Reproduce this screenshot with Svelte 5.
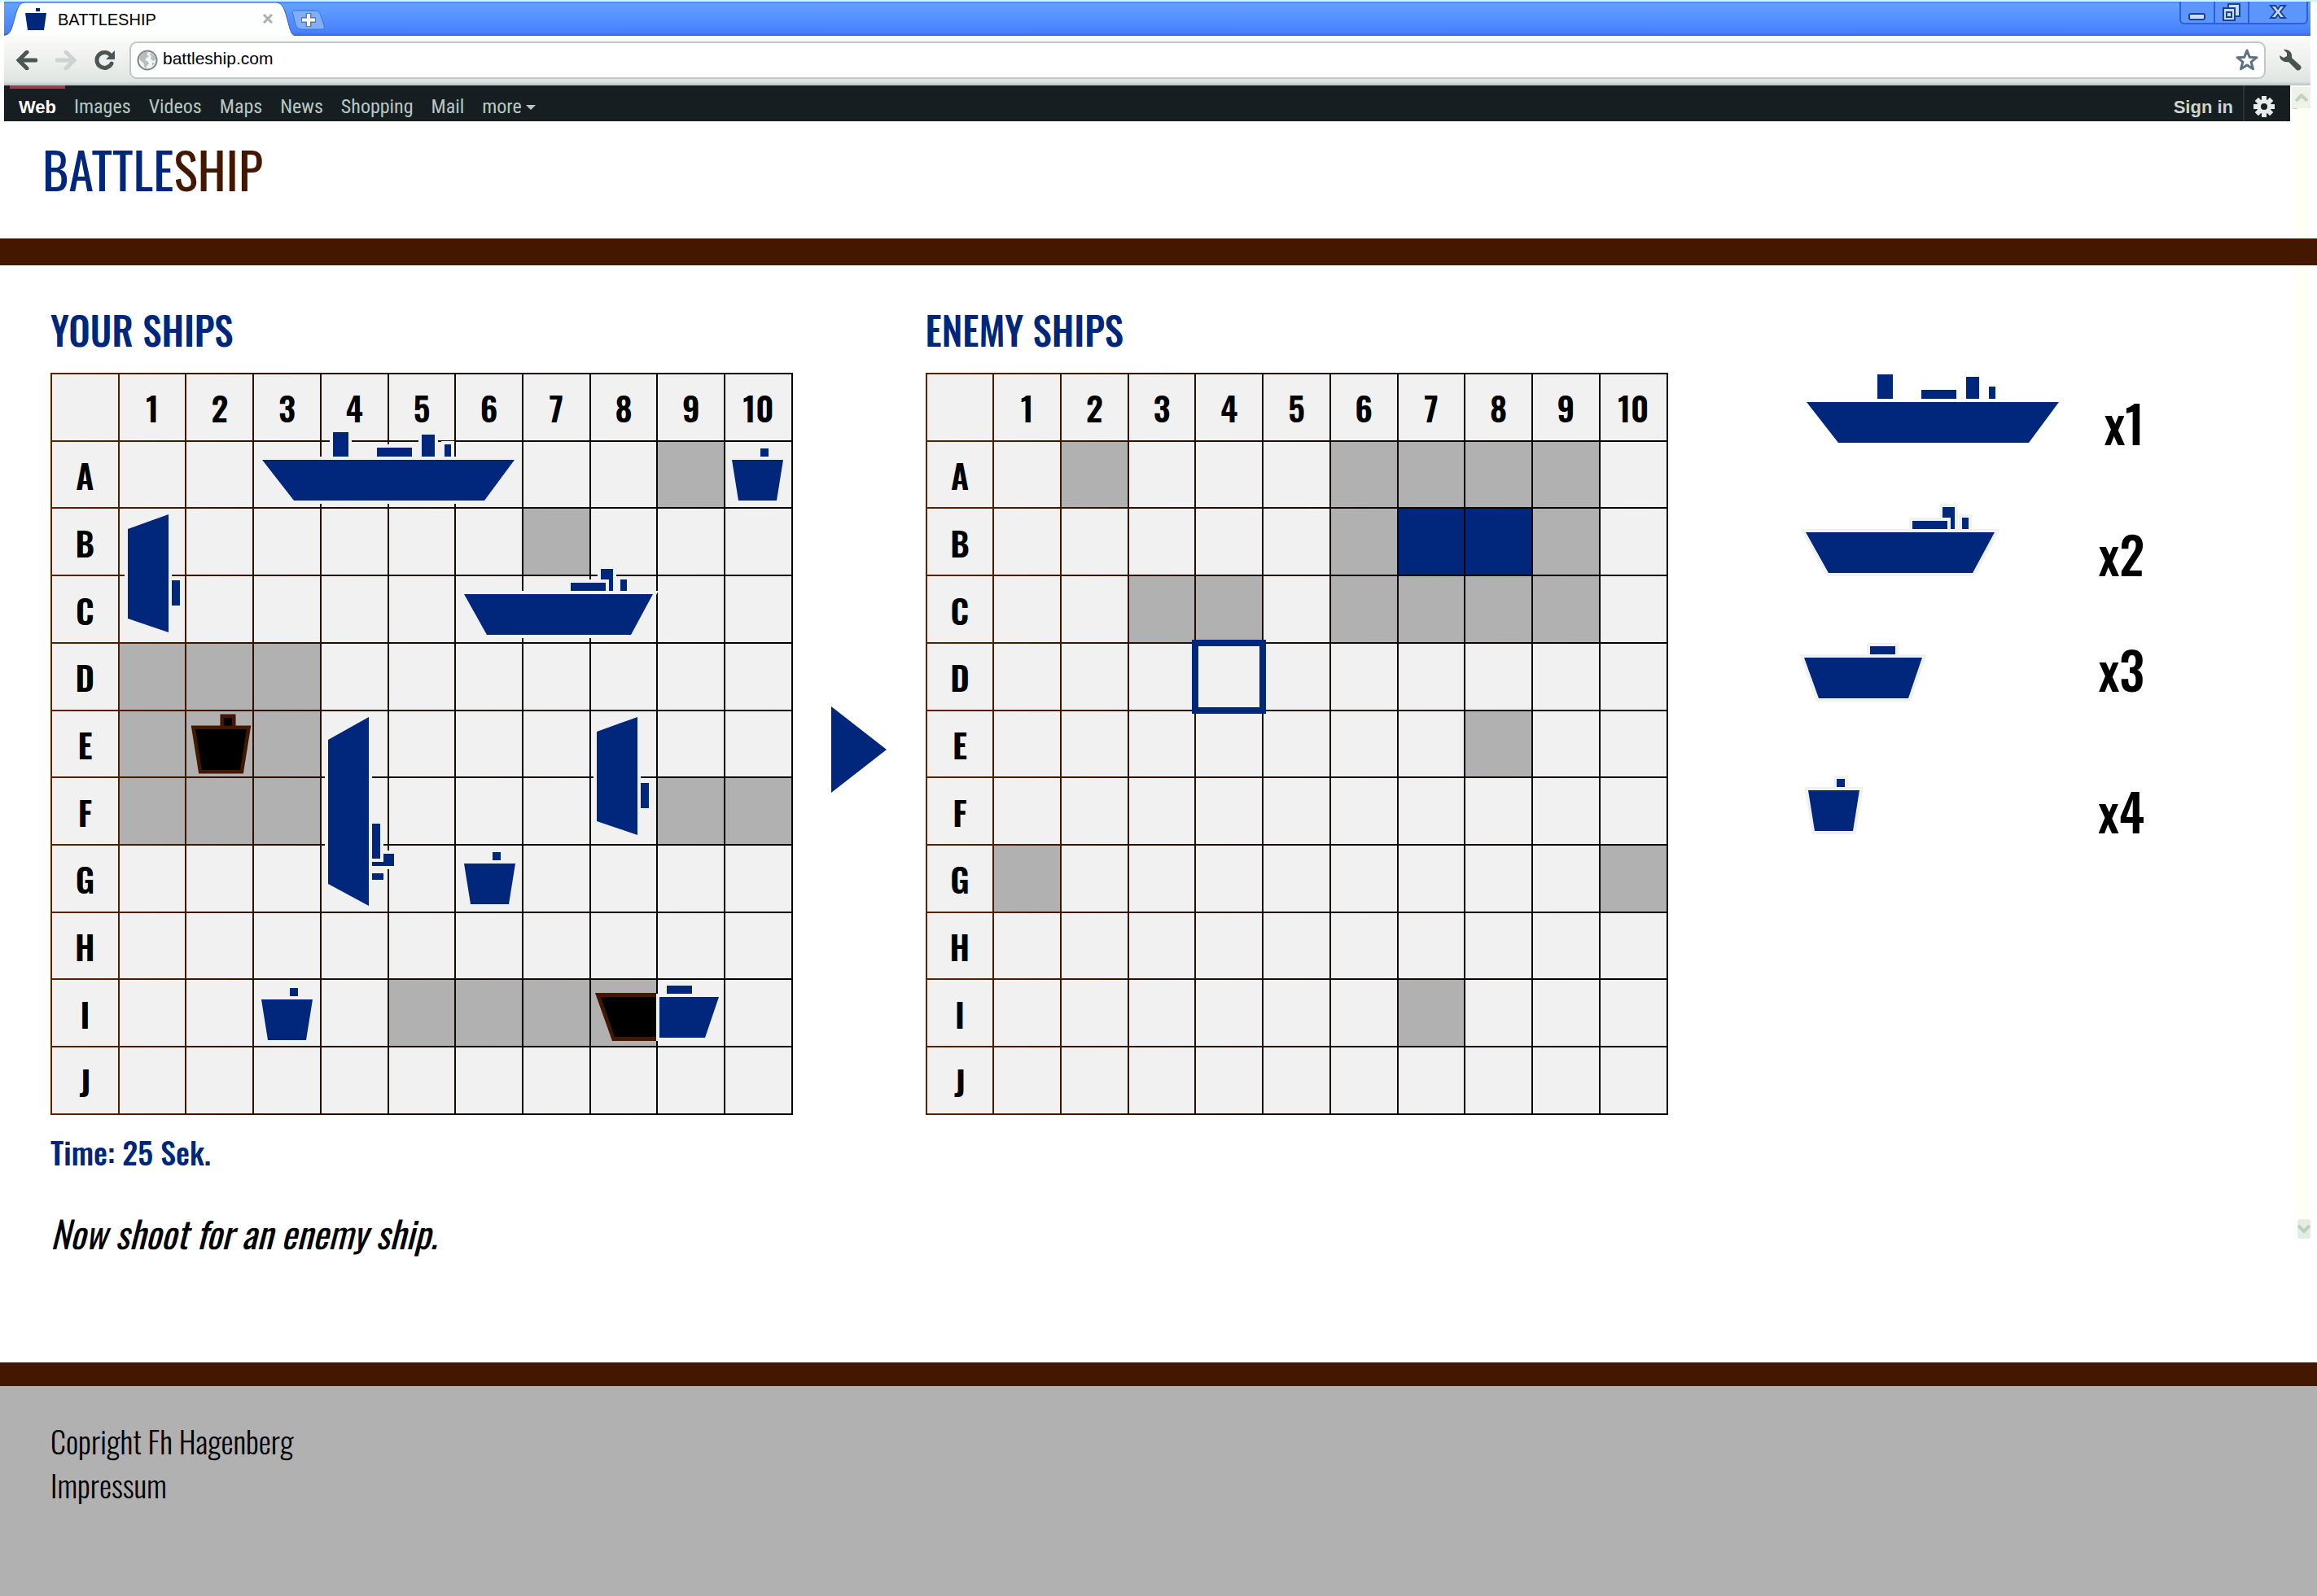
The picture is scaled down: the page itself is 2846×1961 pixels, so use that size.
<script>
  const columns = [1, 2, 3, 4, 5, 6, 7, 8, 9, 10];
  const rows = ['A', 'B', 'C', 'D', 'E', 'F', 'G', 'H', 'I', 'J'];
  const links = ['Images', 'Videos', 'Maps', 'News', 'Shopping', 'Mail'];

  const ownMisses = new Set([
    'A9', 'B7', 'D1', 'D2', 'D3', 'E1', 'E2', 'E3', 'F1', 'F2', 'F3',
    'F9', 'F10', 'I5', 'I6', 'I7', 'I8'
  ]);
  const enemyMisses = new Set([
    'A2', 'A6', 'A7', 'A8', 'A9', 'B6', 'B9', 'C3', 'C4', 'C6', 'C7',
    'C8', 'C9', 'E8', 'G1', 'G10', 'I7'
  ]);
  const enemyHits = new Set(['B7', 'B8']);
  let selected = $state('D4');

  // Every shape has its origin at the left end of the deck line.
  const shapes = {
    4: { hull: '0,0 310,0 273,50 39,50', towers: [[87, -34, 19, 30], [141, -15, 43, 11], [196, -31, 16, 27], [224, -19, 8, 15]] },
    3: { hull: '0,0 232,0 205,50 28,50', towers: [[168, -31, 15, 27], [131, -14, 43, 10], [192, -18, 8, 14]] },
    2: { hull: '0,0 145,0 128,50 18,50', towers: [[81, -14, 31, 10]] },
    1: { hull: '0,0 63,0 55,50 8,50', towers: [[35, -14, 10, 10]] }
  };

  const fleet = [
    { size: 4, x: 260, y: 107, turn: 0 },
    { size: 1, x: 837, y: 107, turn: 0 },
    { size: 2, x: 145, y: 174, turn: 90 },
    { size: 3, x: 508, y: 272, turn: 0 },
    { size: 3, x: 391, y: 423, turn: 90 },
    { size: 2, x: 721, y: 423, turn: 90 },
    { size: 1, x: 508, y: 603, turn: 0 },
    { size: 1, x: 259, y: 770, turn: 0 },
    { size: 1, x: 178, y: 438, turn: 0, sunk: true }
  ];

  const legend = [
    { size: 4, box: '-11 -36 326 90', width: 326, height: 90 },
    { size: 3, box: '-10 -36 250 90', width: 250, height: 90 },
    { size: 2, box: '-8 -20 162 74', width: 162, height: 74 },
    { size: 1, box: '-13 -20 82 74', width: 82, height: 74 }
  ];
</script>

{#snippet ship(size)}
  {#each shapes[size].towers as [x, y, width, height]}
    <rect {x} {y} {width} {height} />
  {/each}
  <polygon points={shapes[size].hull} />
{/snippet}

<div class="page">
  <div class="browser">
    <div class="tabs">
      <div class="tab">
        <svg class="tab-shape" viewBox="0 0 358 42" aria-hidden="true">
          <path d="M0 42C8 41 9 34 12 24C15 14 17 1 25 1H334C343 1 345 12 348 22C351 33 352 41 358 42Z" />
          <path class="edge" d="M0 41C8 40 9 34 12 24C15 14 17 1 25 1H334C343 1 345 12 348 22C351 33 352 41 358 42" />
        </svg>
        <svg class="favicon" viewBox="0 0 26 27" aria-hidden="true">
          <path d="M13 0h5v4h-5zM0 6h26l-3 21H3z" />
        </svg>
        <span class="tab-title">BATTLESHIP</span>
        <button class="close" aria-label="Close tab">
          <svg viewBox="0 0 12 12"><path d="M1 1l10 10M11 1L1 11" /></svg>
        </button>
      </div>
      <button class="new-tab" aria-label="New tab">
        <svg viewBox="0 0 42 25">
          <path class="back" d="M4 1H29C33 1 35 4 36 7L40 19C41 22 40 24 37 24H13C8 24 6 21 5 18L2 6C1 3 1 1 4 1Z" />
          <path class="plus-edge" d="M21 4v17M12 12.500h18" />
          <path class="plus" d="M21 5v15M13 12.500h16" />
        </svg>
      </button>
      <div class="window-buttons">
        <button aria-label="Minimize">
          <svg viewBox="0 0 22 22"><rect x="1" y="13" width="19" height="7" rx="2" /></svg>
        </button>
        <button aria-label="Restore">
          <svg viewBox="0 0 22 22">
            <rect x="7" y="1" width="14" height="15" />
            <rect x="1" y="6" width="14" height="15" />
            <rect class="hole" x="5" y="11" width="6" height="6" />
          </svg>
        </button>
        <button class="wide" aria-label="Close window">
          <svg viewBox="0 0 22 22"><path d="M2 3h6l3 4 3-4h6l-6 7.500 6 7.500h-6l-3-4-3 4H2l6-7.500z" /></svg>
        </button>
      </div>
    </div>

    <div class="toolbar">
      <button class="tool" aria-label="Back">
        <svg viewBox="0 0 26 24"><path d="M24 12H4M13 2L3 12l10 10" /></svg>
      </button>
      <button class="tool faded" aria-label="Forward">
        <svg viewBox="0 0 26 24"><path d="M2 12h20M13 2l10 10-10 10" /></svg>
      </button>
      <button class="tool" aria-label="Reload">
        <svg viewBox="0 0 26 24">
          <path d="M21 16A9.500 9.500 0 1 1 19 5" />
          <path class="solid" d="M25 0v11H14z" />
        </svg>
      </button>
      <div class="address">
        <svg class="globe" viewBox="0 0 26 26" aria-hidden="true">
          <circle cx="13" cy="13" r="11.500" />
          <path d="M4 7C7 3 11 2 14 3L12 6L15 8L12 10L10 13L13 14L15 17L12 20L11 23C9 22 9 18 8 16L5 14L3 11ZM17 4C21 6 23 9 23 12L20 14L17 11L18 8L16 6ZM19 16L22 16L19 20Z" />
        </svg>
        <input aria-label="Address" value="battleship.com" />
        <button class="star" aria-label="Bookmark this page">
          <svg viewBox="0 0 30 30"><path d="M15 3l3.200 8.300 8.800.4-6.900 5.500 2.400 8.600L15 21l-7.500 4.800 2.400-8.600L3 11.700l8.800-.4z" /></svg>
        </button>
      </div>
      <button class="wrench" aria-label="Settings">
        <svg viewBox="0 0 30 28">
          <path d="M7 1C11 0 17 3 17 8C17 10 17 11 18 12L28 21C30 24 26 28 23 26L13 16C8 17 2 14 2 8L7 11L11 9L11 5Z" />
        </svg>
      </button>
    </div>

    <nav class="services">
      <a class="current" href="#web">Web</a>
      {#each links as link}
        <a href="#{link.toLowerCase()}">{link}</a>
      {/each}
      <a href="#more">more <i class="caret"></i></a>
      <a class="sign-in" href="#signin">Sign in</a>
      <button class="gear" aria-label="Options">
        <svg viewBox="-14 -14 28 28">
          {#each [0, 45, 90, 135] as angle}
            <rect x="-3" y="-13" width="6" height="26" transform="rotate({angle})" />
          {/each}
          <circle r="9" />
          <circle class="hole" r="4" />
        </svg>
      </button>
    </nav>
  </div>

  <div class="scrollbar" aria-hidden="true">
    <span class="scroll-up"><svg viewBox="0 0 16 10"><path d="M1 9l7-7 7 7" /></svg></span>
    <span class="track"></span>
    <span class="scroll-down"><svg viewBox="0 0 16 10"><path d="M1 1l7 7 7-7" /></svg></span>
  </div>

  <header>
    <h1>BATTLE<span>SHIP</span></h1>
  </header>

  <main>
    <h2 class="own">YOUR SHIPS</h2>
    <h2 class="enemy">ENEMY SHIPS</h2>

    <div class="board own">
      <table aria-label="Your ships">
        <tbody>
          <tr><td></td>{#each columns as column}<th scope="col">{column}</th>{/each}</tr>
          {#each rows as row}
            <tr>
              <th scope="row">{row}</th>
              {#each columns as column}
                <td class:miss={ownMisses.has(row + column)}></td>
              {/each}
            </tr>
          {/each}
        </tbody>
      </table>
      <svg class="fleet" viewBox="0 0 912 912" aria-hidden="true">
        {#each fleet as item}
          <g class="ship outlined" class:sunk={item.sunk} transform="translate({item.x} {item.y}) rotate({item.turn})">
            {@render ship(item.size)}
          </g>
        {/each}
        <g transform="translate(676 767)">
          <polygon class="scorch" points="-7,-5 68,-5 68,54 14,54" />
          <polygon points="0,0 68,0 68,49 17,49" />
          <g class="ship outlined">
            <rect x="81" y="-14" width="31" height="10" />
            <polygon points="72,0 145,0 128,50 72,50" />
          </g>
        </g>
      </svg>
    </div>

    <svg class="turn" viewBox="0 0 68 106" role="img" aria-label="Your turn to shoot">
      <path d="M0 0L68 53L0 106Z" />
    </svg>

    <div class="board enemy">
      <table aria-label="Enemy ships">
        <tbody>
          <tr><td></td>{#each columns as column}<th scope="col">{column}</th>{/each}</tr>
          {#each rows as row}
            <tr>
              <th scope="row">{row}</th>
              {#each columns as column}
                <td
                  class:miss={enemyMisses.has(row + column)}
                  class:hit={enemyHits.has(row + column)}
                  class:selected={selected === row + column}
                >
                  <button aria-label="{row}{column}" onclick={() => (selected = row + column)}></button>
                </td>
              {/each}
            </tr>
          {/each}
        </tbody>
      </table>
    </div>

    <div class="legend">
      <div class="kinds">
        {#each legend as item}
          <svg class="ship" class:outlined={item.size < 4} viewBox={item.box} width={item.width} height={item.height} role="img" aria-label="Ship of length {item.size}">
            {@render ship(item.size)}
          </svg>
        {/each}
      </div>
      <div class="counts">
        {#each legend as item, index}
          <span>x{index + 1}</span>
        {/each}
      </div>
    </div>

    <div class="notes">
      <p class="time">Time: 25 Sek.</p>
      <p class="hint">Now shoot for an enemy ship.</p>
    </div>
  </main>

  <footer>
    <p>Copright Fh Hagenberg</p>
    <a href="#impressum">Impressum</a>
  </footer>
</div>

<style>
  :global(body) {
    margin: 0;
    background: #fff;
  }

  .page {
    --navy: #00277c;
    --brown: #431700;
    --cell: #f1f1f1;
    --grey: #b1b1b1;
    position: relative;
    display: flex;
    flex-direction: column;
    min-height: 100vh;
    font-family: Oswald, 'Roboto Condensed', 'Liberation Sans', sans-serif;
    color: #000;
  }

  button {
    margin: 0;
    padding: 0;
    border: 0;
    background: none;
    cursor: pointer;
  }

  svg {
    display: block;
  }

  a {
    color: inherit;
    text-decoration: none;
  }

  h1, h2, p {
    margin: 0;
    font-weight: 400;
  }

  /* Browser frame */
  .browser {
    padding: 2px 8px 0 5px;
    background: linear-gradient(#c9f7fb 2px, #fff 2px);
    font-family: 'Liberation Sans', Arial, sans-serif;
  }

  .tabs {
    display: flex;
    height: 42px;
    background: linear-gradient(#4a86e0, #63a1ff 3px, #4780fe 38px, #3166d0);
  }

  .tab {
    position: relative;
    display: flex;
    align-items: center;
    width: 358px;
    box-sizing: border-box;
    padding: 0 28px 0 26px;
  }

  .tab-shape {
    position: absolute;
    inset: 0;
    width: 358px;
    height: 42px;
    fill: #fdfefe;
  }

  .tab-shape .edge {
    fill: none;
    stroke: #3a64a8;
    stroke-width: 1;
  }

  .favicon {
    position: relative;
    width: 26px;
    height: 27px;
    fill: var(--navy);
  }

  .tab-title {
    position: relative;
    margin-left: 14px;
    padding-top: 2px;
    font-size: 20px;
    line-height: 24px;
  }

  .close {
    position: relative;
    margin-left: auto;
  }

  .close svg {
    width: 12px;
    height: 12px;
    stroke: #a9b1ae;
    stroke-width: 3;
  }

  .new-tab {
    align-self: center;
    margin: 2px 0 0 -5px;
    z-index: 1;
  }

  .new-tab svg {
    width: 42px;
    height: 25px;
  }

  .new-tab .back {
    fill: #82aef8;
    stroke: #3d6fd6;
  }

  .plus-edge {
    stroke: #5b7ba8;
    stroke-width: 7;
  }

  .plus {
    stroke: #f4f8ee;
    stroke-width: 4;
  }

  .window-buttons {
    display: flex;
    height: 28px;
    margin: 0 3px 0 auto;
    border: 2px solid #2b5fe0;
    border-top: 0;
    border-radius: 0 0 6px 6px;
    box-sizing: border-box;
    background: #5d96fb;
  }

  .window-buttons button {
    display: grid;
    place-items: center;
    width: 42px;
    border-right: 2px solid #2b5fe0;
    box-sizing: border-box;
  }

  .window-buttons .wide {
    width: 70px;
    border-right: 0;
  }

  .window-buttons svg {
    width: 22px;
    height: 22px;
    fill: #c6defa;
    stroke: #1c3f9a;
    stroke-width: 2;
  }

  .toolbar {
    display: flex;
    align-items: center;
    height: 61px;
    box-sizing: border-box;
    padding: 0 10px 2px 15px;
    background: linear-gradient(#fbfbfa, #eef0ee 30px, #dfe5e2 56px, #b8c4c1);
  }

  .tool {
    margin-right: 22px;
  }

  .tool svg {
    width: 26px;
    height: 24px;
    fill: none;
    stroke: #4b5654;
    stroke-width: 5;
    stroke-linecap: round;
  }

  .tool .solid {
    fill: #4b5654;
    stroke: none;
  }

  .faded svg {
    stroke: #ccd3d0;
  }

  .address {
    display: flex;
    flex: 1;
    align-items: center;
    height: 46px;
    margin-right: 15px;
    padding: 0 6px 0 7px;
    border: 2px solid #bccac5;
    border-radius: 9px;
    box-sizing: border-box;
    background: #fff;
  }

  .tool + .address {
    margin-left: -5px;
  }

  .globe {
    flex: none;
    width: 26px;
    height: 26px;
    fill: #b4bfbd;
  }

  .globe circle {
    fill: #f3f5f5;
    stroke: #7d8987;
    stroke-width: 2;
  }

  .address input {
    flex: 1;
    min-width: 0;
    padding: 0 6px 4px;
    border: 0;
    outline: 0;
    background: none;
    color: #000;
    font: 21px/28px 'Liberation Sans', Arial, sans-serif;
  }

  .star svg {
    width: 30px;
    height: 30px;
    fill: none;
    stroke: #5c7280;
    stroke-width: 3;
    stroke-linejoin: round;
  }

  .wrench svg {
    width: 30px;
    height: 28px;
    fill: #48524f;
  }

  .services {
    display: flex;
    height: 44px;
    margin-right: 25px;
    padding-left: 7px;
    background: #171e21;
    color: #b7c8c3;
    font-family: 'Roboto Condensed', 'Liberation Sans', sans-serif;
    font-size: 24px;
    line-height: 53px;
  }

  .services a {
    padding: 0 11px;
    white-space: nowrap;
  }

  .services .current,
  .services .sign-in {
    font-family: 'Liberation Sans', Arial, sans-serif;
    font-size: 22px;
    font-weight: 700;
  }

  .services .current {
    box-shadow: inset 0 4px #95404a;
    color: #fff;
  }

  .caret {
    display: inline-block;
    margin-bottom: 4px;
    border: 6px solid transparent;
    border-top-color: #b7c8c3;
    border-bottom: 0;
  }

  .services .sign-in {
    margin-left: auto;
    padding-right: 12px;
    border-right: 2px solid #2a3235;
    color: #c9d6d2;
  }

  .gear {
    padding: 7px 18px 0 10px;
  }

  .gear svg {
    width: 28px;
    height: 28px;
    fill: #e4ebe9;
  }

  .gear .hole {
    fill: #171e21;
  }

  .scrollbar {
    position: absolute;
    top: 107px;
    right: 8px;
    display: flex;
    flex-direction: column;
    align-items: flex-end;
    height: 1415px;
  }

  .scrollbar svg {
    width: 16px;
    height: 10px;
    fill: none;
    stroke: #c3d0c4;
    stroke-width: 4;
  }

  .scroll-up, .scroll-down {
    display: grid;
    place-items: center;
    height: 26px;
    background: #eff2e6;
    border-radius: 3px;
  }

  .scroll-up {
    width: 23px;
    box-shadow: 0 1px #c9d2c6;
  }

  .track {
    flex: 1;
    width: 16px;
    background: #fffff5;
  }

  .scroll-down {
    width: 16px;
    height: 24px;
    background: #e3ede3;
  }

  .scroll-down svg {
    stroke: #bccfbf;
  }

  /* Game page */
  header {
    position: relative;
    padding: 18px 52px 46px;
    border-bottom: 33px solid var(--brown);
  }

  h1 {
    color: var(--navy);
    font-size: 62px;
    line-height: 80px;
  }

  h1 span {
    color: var(--brown);
  }

  main {
    display: grid;
    grid-template-columns: 912fr 163fr 910fr 587fr;
    padding: 49px 212px 129px 62px;
  }

  h2 {
    margin-bottom: 23px;
    color: var(--navy);
    font-size: 47px;
    font-weight: 500;
    line-height: 60px;
  }

  .own {
    grid-column: 1;
  }

  .enemy {
    grid-column: 3;
  }

  h2.own, h2.enemy {
    grid-row: 1;
  }

  .board, .turn, .legend {
    grid-row: 2;
  }

  .board {
    position: relative;
    aspect-ratio: 1;
  }

  table {
    width: 100%;
    height: 100%;
    table-layout: fixed;
    border-spacing: 2px;
    background: linear-gradient(to right, #5a2400, #2a1002 30%, #100a06 60%, #000);
  }

  td, th {
    height: 9%;
    padding: 0;
    background: var(--cell);
  }

  th {
    padding-top: 2px;
    font-size: 41px;
    font-weight: 600;
    line-height: 42px;
  }

  .miss {
    background: var(--grey);
  }

  .hit {
    background: var(--navy);
  }

  .selected {
    outline: 8px solid var(--navy);
    outline-offset: -3px;
  }

  td button {
    display: block;
    width: 100%;
    height: 100%;
  }

  .fleet {
    position: absolute;
    inset: 0;
    width: 100%;
    height: 100%;
  }

  .ship {
    fill: var(--navy);
  }

  .outlined {
    stroke: var(--cell);
    stroke-width: 8;
    paint-order: stroke;
  }

  .sunk {
    fill: #000;
    stroke: var(--brown);
    stroke-width: 9;
  }

  .scorch {
    fill: var(--brown);
  }

  .turn {
    grid-column: 2;
    align-self: center;
    width: 68px;
    padding: 14px 0 0 47px;
    fill: var(--navy);
  }

  .legend {
    grid-column: 4;
    display: flex;
    justify-content: space-between;
    padding-left: 159px;
  }

  .kinds, .counts {
    display: grid;
    align-content: start;
    align-items: end;
  }

  .kinds {
    grid-template-rows: 90px 160px 154px 163px;
  }

  .counts {
    grid-template-rows: 101px 161px 142px 174px;
    font-size: 62px;
    font-weight: 500;
    line-height: 80px;
    text-align: right;
  }

  .notes {
    grid-row: 3;
    grid-column: 1;
  }

  .time {
    margin-top: 20px;
    color: var(--navy);
    font-size: 38px;
    font-weight: 500;
    line-height: 50px;
  }

  .hint {
    margin-top: 45px;
    font-size: 45px;
    font-style: italic;
    line-height: 60px;
  }

  footer {
    flex: 1;
    padding: 40px 62px;
    border-top: 29px solid var(--brown);
    background: var(--grey);
    font-size: 38px;
    font-weight: 300;
    line-height: 54px;
  }

  footer p {
    font-weight: 300;
  }
</style>
